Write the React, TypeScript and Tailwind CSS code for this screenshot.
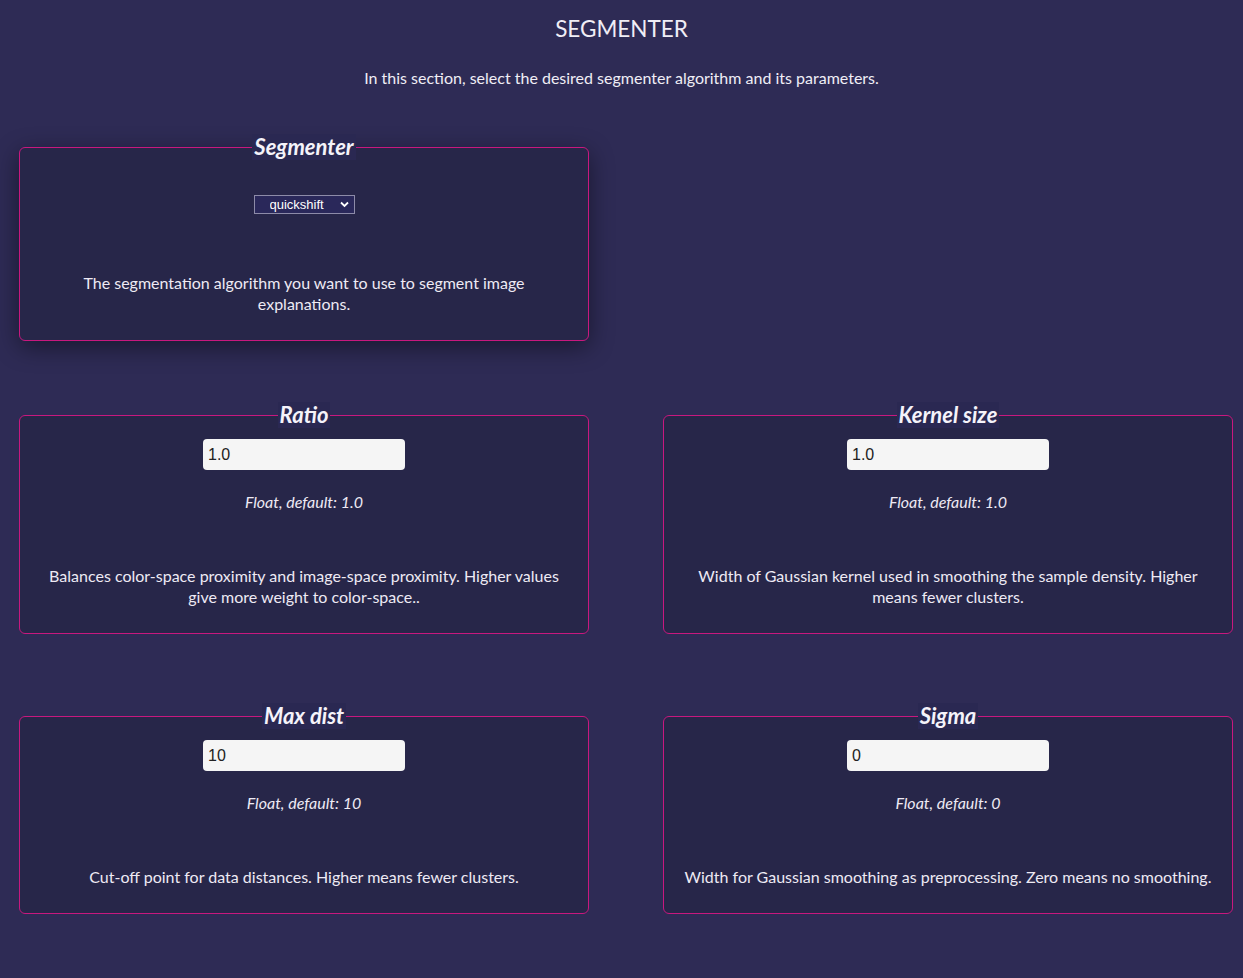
import React from "react";

const FONT = { fontFamily: 'Lato, "Open Sans", sans-serif' };

function Legend({ children }: { children: React.ReactNode }) {
  return (
    <legend className="mx-auto px-[2px] bg-[#2a2852] text-[22px] leading-[26px] font-bold italic text-[#f5f3fa]">
      {children}
    </legend>
  );
}

function ParamCard({
  title,
  value,
  hint,
  desc,
}: {
  title: string;
  value: string;
  hint: string;
  desc: string;
}) {
  return (
    <fieldset className="w-[570px] border border-[#c8187f] rounded-[6px] bg-[#272649] px-[18px] pb-[26px] text-center">
      <Legend>{title}</Legend>
      <div className="flex justify-center mt-[11px]">
        <input
          defaultValue={value}
          className="w-[202px] h-[31px] rounded-[4px] bg-[#f5f5f5] text-[#222] pl-[5px] text-[16px] outline-none"
          style={{ fontFamily: '"Liberation Sans", Arial, sans-serif' }}
        />
      </div>
      <p className="mt-[20px] italic text-[16px] leading-[24px] text-[#eeeaf4]">{hint}</p>
      <p className="mt-[51px] text-[16px] leading-[21px] text-[#eeeaf4]">{desc}</p>
    </fieldset>
  );
}

export default function App() {
  return (
    <div className="min-h-[978px] bg-[#2e2b55] text-[#f0eef6] pb-10" style={FONT}>
      <h1 className="pt-[13px] text-center text-[22.5px] leading-[32px] font-normal">SEGMENTER</h1>
      <p className="mt-[21px] text-center text-[16px] leading-[24px]">
        In this section, select the desired segmenter algorithm and its parameters.
      </p>

      <div className="pl-[19px] mt-[44px]">
        <fieldset className="w-[570px] border border-[#c8187f] rounded-[6px] bg-[#272649] px-[18px] pb-[26px] text-center shadow-[0_6px_24px_rgba(0,0,0,0.45)]">
          <Legend>Segmenter</Legend>
          <div className="flex justify-center mt-[35px]">
            <div className="relative w-[101px] h-[19px]">
              <select
                defaultValue="quickshift"
                className="appearance-none block w-full h-[19px] border border-[#8d8ba8] bg-[#2a285a] text-white text-[13px] leading-[17px] py-0 pl-[15px] outline-none"
                style={{ fontFamily: '"Liberation Sans", Arial, sans-serif' }}
              >
                <option value="quickshift">quickshift</option>
                <option value="slic">slic</option>
                <option value="felzenszwalb">felzenszwalb</option>
              </select>
              <svg
                className="absolute right-[6px] top-[6px] pointer-events-none"
                width="9"
                height="7"
                viewBox="0 0 9 7"
              >
                <path d="M1 1.5 L4.5 5 L8 1.5" stroke="white" strokeWidth="1.8" fill="none" />
              </svg>
            </div>
          </div>
          <p className="mt-[58px] text-[16px] leading-[21px] text-[#eeeaf4]">
            The segmentation algorithm you want to use to segment image explanations.
          </p>
        </fieldset>
      </div>

      <div className="flex pl-[19px] gap-[74px] mt-[61px]">
        <ParamCard
          title="Ratio"
          value="1.0"
          hint="Float, default: 1.0"
          desc="Balances color-space proximity and image-space proximity. Higher values give more weight to color-space.."
        />
        <ParamCard
          title="Kernel size"
          value="1.0"
          hint="Float, default: 1.0"
          desc="Width of Gaussian kernel used in smoothing the sample density. Higher means fewer clusters."
        />
      </div>

      <div className="flex pl-[19px] gap-[74px] mt-[69px]">
        <ParamCard
          title="Max dist"
          value="10"
          hint="Float, default: 10"
          desc="Cut-off point for data distances. Higher means fewer clusters."
        />
        <ParamCard
          title="Sigma"
          value="0"
          hint="Float, default: 0"
          desc="Width for Gaussian smoothing as preprocessing. Zero means no smoothing."
        />
      </div>
    </div>
  );
}
